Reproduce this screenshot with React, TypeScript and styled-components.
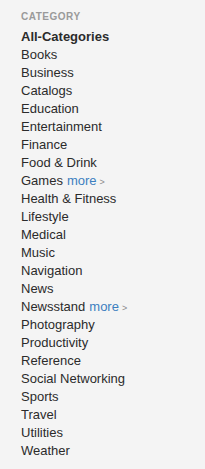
import styled, {createGlobalStyle} from "styled-components";

const GlobalStyle = createGlobalStyle`
    html, body {
        margin: 0;
        padding: 0;
        background: #f4f4f4;
    }
    body {
        font-family: "Liberation Sans", Arial, sans-serif;
    }
`;

const StyledSidebar = styled.nav`
    width: 205px;
    min-height: 469px;
    box-sizing: border-box;
    padding: 10px 0 0 21px;
    background: #f4f4f4;
`;

const StyledHeading = styled.div`
    font-size: 10px;
    line-height: 14px;
    font-weight: bold;
    color: #9a9a9a;
    letter-spacing: 0.5px;
    margin-bottom: 4px;
`;

const StyledList = styled.ul`
    list-style: none;
    margin: 0;
    padding: 0;
`;

const StyledItem = styled.li<{ $active?: boolean }>`
    font-size: 13px;
    line-height: 18px;
    height: 18px;
    color: #2b2b2b;
    font-weight: ${props => (props.$active ? 'bold' : 'normal')};
    white-space: nowrap;
`;

const StyledMore = styled.span`
    color: #3c7fc0;
    margin-left: 4px;
`;

const StyledChevron = styled.span`
    color: #8a8a8a;
    font-size: 9px;
    margin-left: 3px;
`;

const categories: { name: string; more?: boolean; active?: boolean }[] = [
    {name: "All-Categories", active: true},
    {name: "Books"},
    {name: "Business"},
    {name: "Catalogs"},
    {name: "Education"},
    {name: "Entertainment"},
    {name: "Finance"},
    {name: "Food & Drink"},
    {name: "Games", more: true},
    {name: "Health & Fitness"},
    {name: "Lifestyle"},
    {name: "Medical"},
    {name: "Music"},
    {name: "Navigation"},
    {name: "News"},
    {name: "Newsstand", more: true},
    {name: "Photography"},
    {name: "Productivity"},
    {name: "Reference"},
    {name: "Social Networking"},
    {name: "Sports"},
    {name: "Travel"},
    {name: "Utilities"},
    {name: "Weather"},
];

export default function App() {
    return (
        <>
            <GlobalStyle/>
            <StyledSidebar>
                <StyledHeading>CATEGORY</StyledHeading>
                <StyledList>
                    {categories.map(cat => (
                        <StyledItem key={cat.name} $active={cat.active}>
                            {cat.name}
                            {cat.more && <><StyledMore>more</StyledMore><StyledChevron>&gt;</StyledChevron></>}
                        </StyledItem>
                    ))}
                </StyledList>
            </StyledSidebar>
        </>
    );
}
